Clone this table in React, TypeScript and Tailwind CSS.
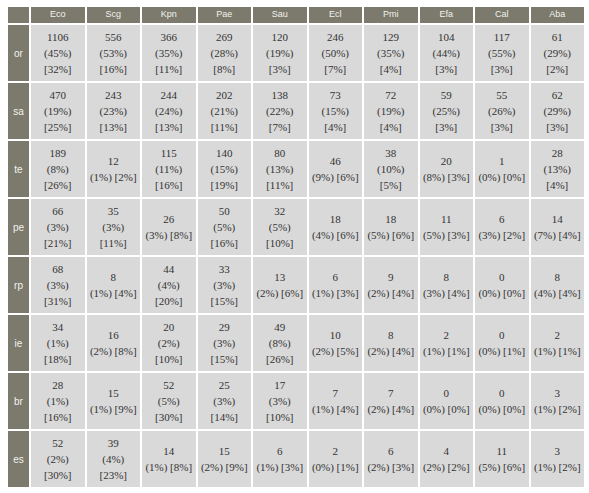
import React from "react";

const cols = ["Eco", "Scg", "Kpn", "Pae", "Sau", "Ecl", "Pmi", "Efa", "Cal", "Aba"];

// each cell: count, (% of row), [% of column]
const rows: [string, string][] = [
  ["or", "1106 45 32|556 53 16|366 35 11|269 28 8|120 19 3|246 50 7|129 35 4|104 44 3|117 55 3|61 29 2"],
  ["sa", "470 19 25|243 23 13|244 24 13|202 21 11|138 22 7|73 15 4|72 19 4|59 25 3|55 26 3|62 29 3"],
  ["te", "189 8 26|12 1 2|115 11 16|140 15 19|80 13 11|46 9 6|38 10 5|20 8 3|1 0 0|28 13 4"],
  ["pe", "66 3 21|35 3 11|26 3 8|50 5 16|32 5 10|18 4 6|18 5 6|11 5 3|6 3 2|14 7 4"],
  ["rp", "68 3 31|8 1 4|44 4 20|33 3 15|13 2 6|6 1 3|9 2 4|8 3 4|0 0 0|8 4 4"],
  ["ie", "34 1 18|16 2 8|20 2 10|29 3 15|49 8 26|10 2 5|8 2 4|2 1 1|0 0 1|2 1 1"],
  ["br", "28 1 16|15 1 9|52 5 30|25 3 14|17 3 10|7 1 4|7 2 4|0 0 0|0 0 0|3 1 2"],
  ["es", "52 2 30|39 4 23|14 1 8|15 2 9|6 1 3|2 0 1|6 2 3|4 2 2|11 5 6|3 1 2"],
];

function Cell({ value }: { value: string }) {
  const [n, a, b] = value.split(" ");
  const pa = `(${a}%)`;
  const pb = `[${b}%]`;
  // short pairs stay on one line, longer ones wrap like the original table
  const lines = `${pa} ${pb}`.length <= 9 ? [n, `${pa} ${pb}`] : [n, pa, pb];
  return (
    <div className="bg-[#d9d9d9] flex flex-col items-center justify-center text-[11px] leading-[16px] text-[#333333]">
      {lines.map((l, i) => (
        <span key={i} className="whitespace-nowrap">{l}</span>
      ))}
    </div>
  );
}

export default function App() {
  return (
    <div className="w-[589px] h-[493px] bg-white pl-[8px] pt-[7px]" style={{ fontFamily: '"Liberation Serif", serif' }}>
      <div className="w-[576px] grid grid-cols-[21px_repeat(10,minmax(0,1fr))] grid-rows-[16px_repeat(8,56px)] gap-[2px] bg-white">
        <div className="bg-[#7b7a6c]" />
        {cols.map(c => (
          <div
            key={c}
            className="bg-[#7b7a6c] text-[#f2f2ee] text-[9px] flex items-center justify-center"
            style={{ fontFamily: '"Liberation Sans", sans-serif' }}
          >
            {c}
          </div>
        ))}
        {rows.map(([label, data]) => (
          <React.Fragment key={label}>
            <div
              className="bg-[#7b7a6c] text-[#f2f2ee] text-[10px] flex items-center justify-center"
              style={{ fontFamily: '"Liberation Sans", sans-serif' }}
            >
              {label}
            </div>
            {data.split("|").map((v, i) => (
              <Cell key={i} value={v} />
            ))}
          </React.Fragment>
        ))}
      </div>
    </div>
  );
}
